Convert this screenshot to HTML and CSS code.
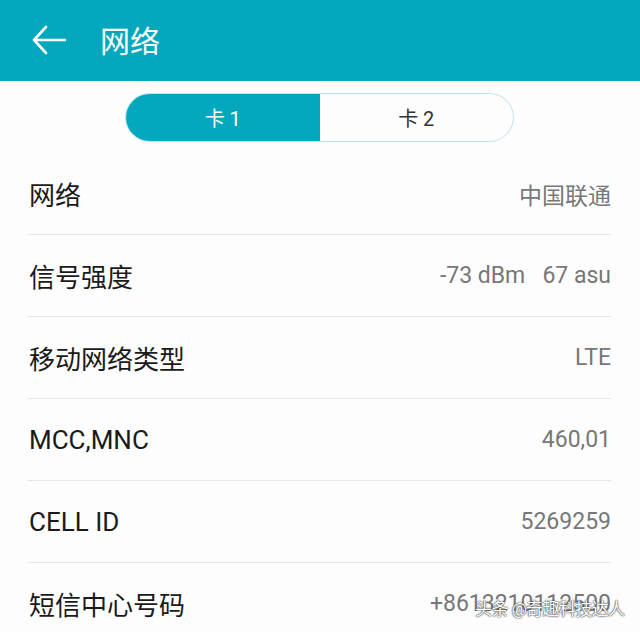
FILE: index.html
```html
<!DOCTYPE html>
<html lang="zh-CN">

<head>
    <meta charset="UTF-8">
    <meta name="viewport" content="width=device-width, initial-scale=1.0">
    <title>网络</title>
    <link rel="stylesheet" href="styles.css">
</head>

<body>
    <header class="topbar">
        <svg class="back" width="34" height="30" viewBox="0 0 34 30">
            <path d="M14 2 L2 15 L14 28 M2 15 H33" fill="none" stroke="#fff" stroke-width="2.6"
                stroke-linecap="round" stroke-linejoin="round" />
        </svg>
        <h1 class="title">网络</h1>
    </header>

    <div class="tabs">
        <div class="seg">
            <div class="seg-item active">卡 1</div>
            <div class="seg-item">卡 2</div>
        </div>
    </div>

    <ul class="list">
        <li class="row"><span class="label">网络</span><span class="value">中国联通</span></li>
        <li class="row"><span class="label">信号强度</span><span class="value">-73 dBm&nbsp;&nbsp;&nbsp;67 asu</span></li>
        <li class="row"><span class="label">移动网络类型</span><span class="value">LTE</span></li>
        <li class="row"><span class="label">MCC,MNC</span><span class="value">460,01</span></li>
        <li class="row"><span class="label">CELL ID</span><span class="value">5269259</span></li>
        <li class="row"><span class="label">短信中心号码</span><span class="value">+8613210112500</span></li>
    </ul>

    <div class="mark">头条 @奇趣科技达人</div>
</body>

</html>
```

FILE: styles.css
```css
html,
body {
    margin: 0;
    height: 632px;
    overflow: hidden;
    background: #fdfdfd;
    font-family: Roboto, "Noto Sans CJK SC", sans-serif;
}

.topbar {
    height: 81px;
    background: #04a8bd;
    display: flex;
    align-items: center;
    padding-left: 32px;
}

.back {
    margin-top: -2px;
}

.title {
    margin: 0 0 4px 34px;
    font-size: 30px;
    font-weight: 400;
    color: #fff;
}

.tabs {
    display: flex;
    padding: 12px 0 0 125px;
}

.seg {
    display: flex;
    width: 389px;
    height: 49px;
    box-sizing: border-box;
    border: 1.5px solid #bfe3e9;
    border-radius: 25px;
    overflow: hidden;
}

.seg-item {
    flex: 1;
    display: flex;
    justify-content: center;
    align-items: center;
    font-size: 20px;
    color: #333;
}

.seg-item.active {
    background: #04a8bd;
    color: #fff;
}

.list {
    list-style: none;
    margin: 11px 0 0;
    padding: 0 29px 0 28px;
}

.row {
    height: 81px;
    border-bottom: 1.5px solid #e6e6e6;
    display: flex;
    justify-content: space-between;
    align-items: center;
}

.label {
    font-size: 26px;
    color: #1a1a1a;
    padding-left: 1px;
}

.value {
    font-size: 23px;
    color: #777;
}

.mark {
    position: absolute;
    left: 475px;
    top: 595px;
    white-space: nowrap;
    font-size: 17px;
    color: #fff;
    letter-spacing: -0.6px;
    text-shadow: 0 0 2px #333, 0 0 1px #222;
}
```
